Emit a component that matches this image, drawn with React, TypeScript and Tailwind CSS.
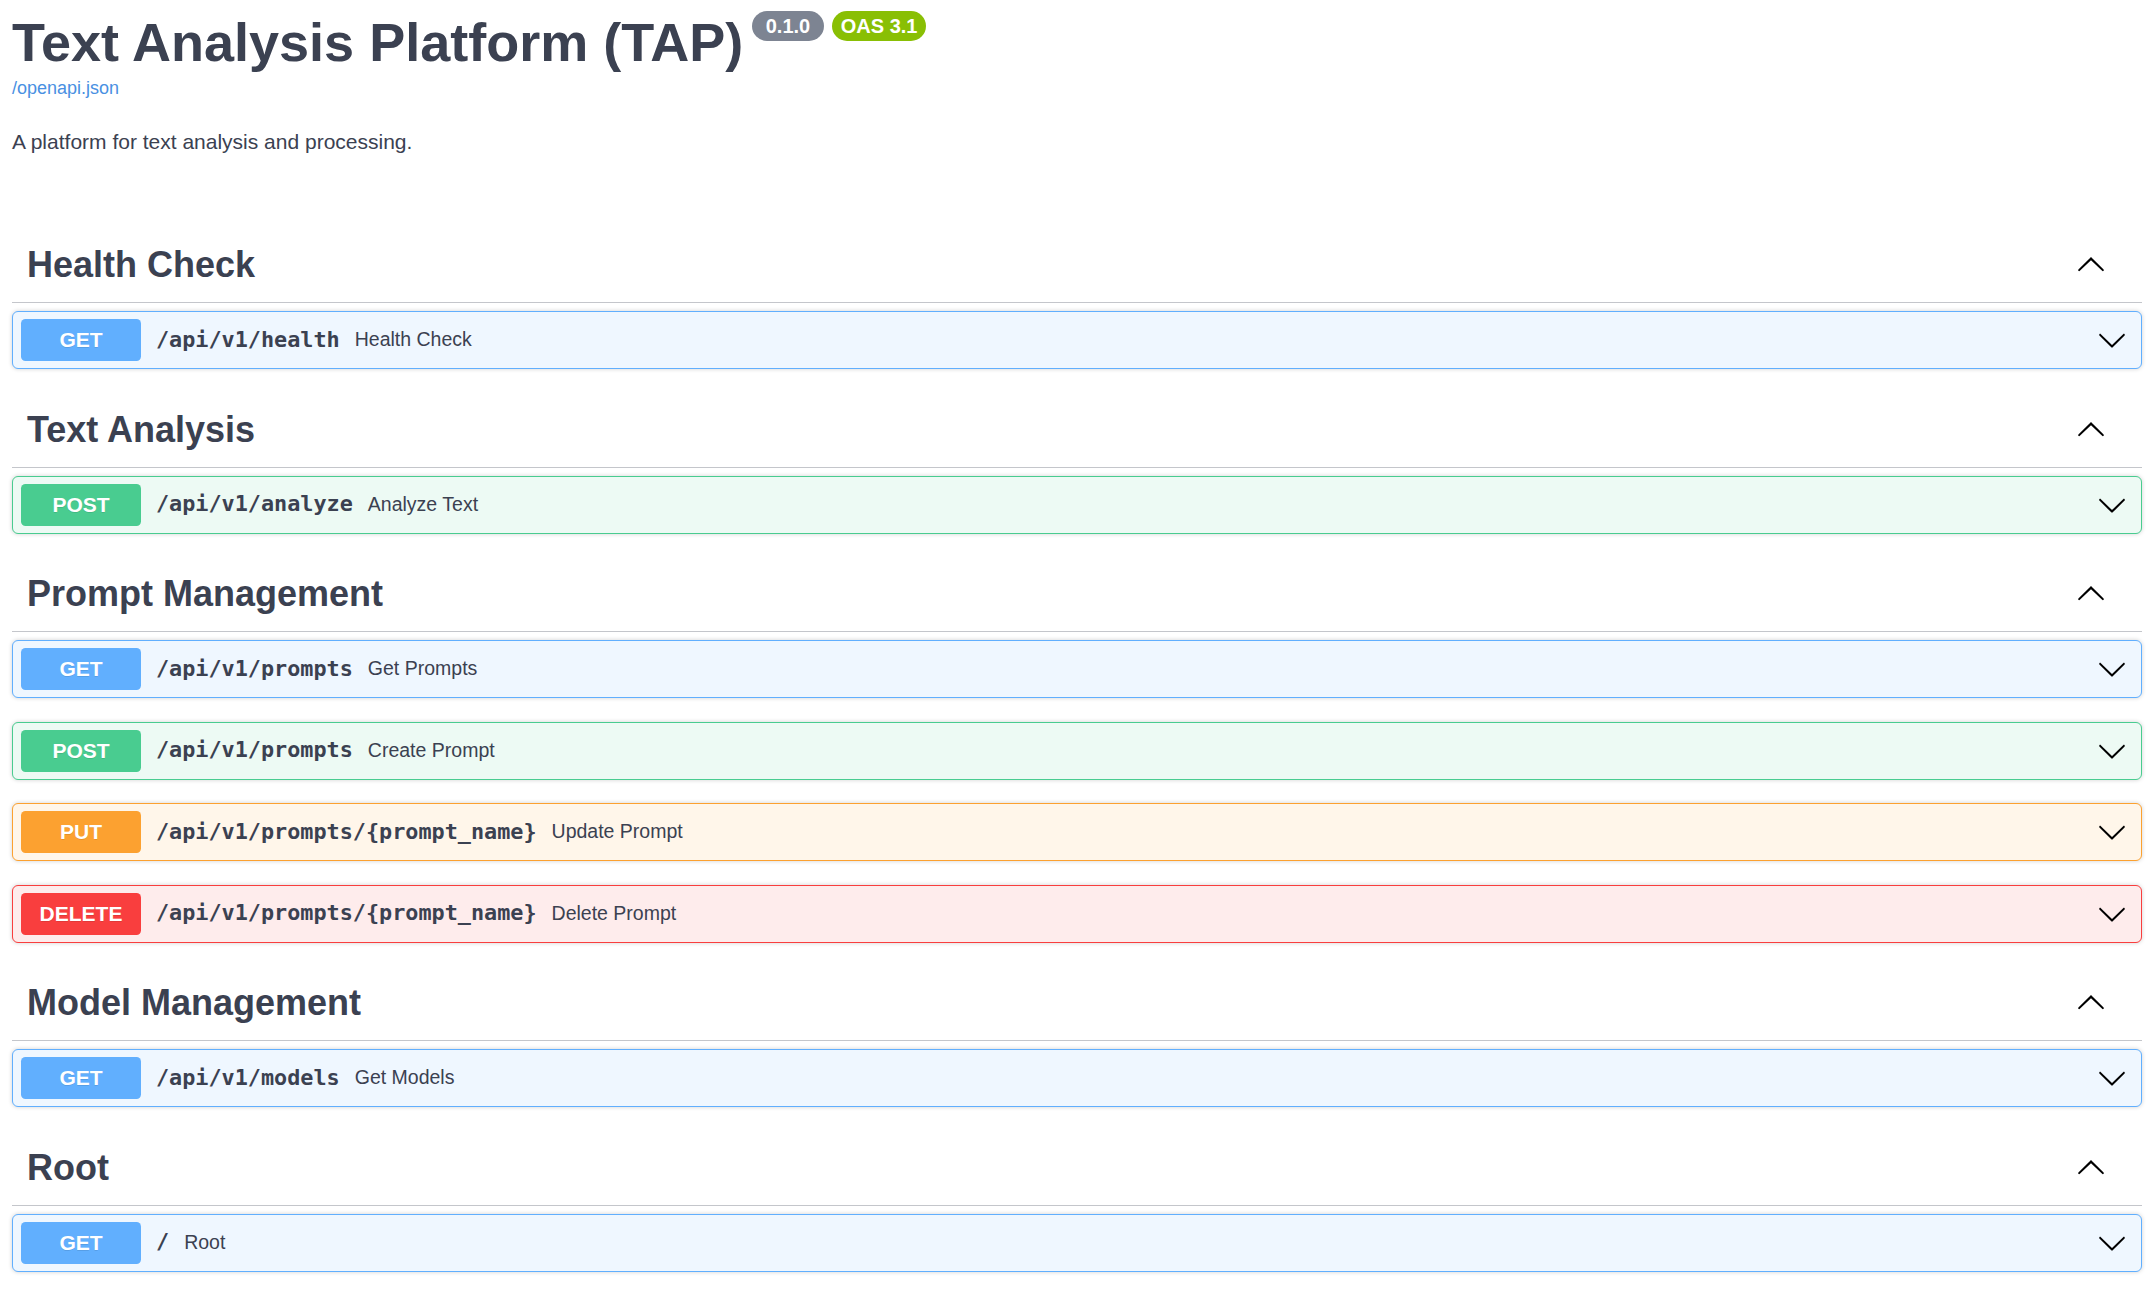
import React from 'react';

type Method = 'GET' | 'POST' | 'PUT' | 'DELETE';

interface Operation {
  method: Method;
  path: string;
  summary: string;
}

interface Tag {
  name: string;
  ops: Operation[];
}

const tags: Tag[] = [
  { name: 'Health Check', ops: [{ method: 'GET', path: '/api/v1/health', summary: 'Health Check' }] },
  { name: 'Text Analysis', ops: [{ method: 'POST', path: '/api/v1/analyze', summary: 'Analyze Text' }] },
  {
    name: 'Prompt Management',
    ops: [
      { method: 'GET', path: '/api/v1/prompts', summary: 'Get Prompts' },
      { method: 'POST', path: '/api/v1/prompts', summary: 'Create Prompt' },
      { method: 'PUT', path: '/api/v1/prompts/{prompt_name}', summary: 'Update Prompt' },
      { method: 'DELETE', path: '/api/v1/prompts/{prompt_name}', summary: 'Delete Prompt' },
    ],
  },
  { name: 'Model Management', ops: [{ method: 'GET', path: '/api/v1/models', summary: 'Get Models' }] },
  { name: 'Root', ops: [{ method: 'GET', path: '/', summary: 'Root' }] },
];

// block border/background + badge colour per method
const methodStyles: Record<Method, { block: string; badge: string }> = {
  GET: { block: 'border-[#61affe] bg-[#eff7ff]', badge: 'bg-[#61affe]' },
  POST: { block: 'border-[#49cc90] bg-[#edfaf4]', badge: 'bg-[#49cc90]' },
  PUT: { block: 'border-[#fca130] bg-[#fff6ea]', badge: 'bg-[#fca130]' },
  DELETE: { block: 'border-[#f93e3e] bg-[#feecec]', badge: 'bg-[#f93e3e]' },
};

const ARROW =
  'M17.418 6.109c.272-.268.709-.268.979 0s.271.701 0 .969l-7.908 7.83c-.27.268-.707.268-.979 0l-7.908-7.83c-.27-.268-.27-.701 0-.969.271-.268.709-.268.979 0L10 13.25l7.418-7.141z';

function Arrow({ up = false }: { up?: boolean }) {
  return (
    <svg
      width="30"
      height="30"
      viewBox="0 0 20 20"
      className={up ? 'rotate-180 shrink-0' : 'shrink-0'}
      aria-hidden="true"
    >
      <path d={ARROW} fill="#000" />
    </svg>
  );
}

function OpBlock({ op }: { op: Operation }) {
  const s = methodStyles[op.method];
  return (
    <div
      className={`mb-[23.5px] flex h-[58px] items-center rounded-[6px] border pl-[8px] pr-[14px] shadow-[0_0_4.5px_rgba(0,0,0,0.19)] ${s.block}`}
    >
      <span
        className={`flex h-[42px] w-[120px] shrink-0 items-center justify-center rounded-[4.5px] text-[21px] font-bold text-white [text-shadow:0_1px_0_rgba(0,0,0,0.1)] ${s.badge}`}
      >
        {op.method}
      </span>
      <span className="px-[15px] font-['DejaVu_Sans_Mono',monospace] text-[21.8px] font-bold text-[#3b4151]">
        {op.path}
      </span>
      <span className="flex-1 text-[19.5px] text-[#3b4151]">{op.summary}</span>
      <Arrow />
    </div>
  );
}

function TagSection({ tag }: { tag: Tag }) {
  return (
    <section className="flex flex-col">
      <h3 className="mb-[8px] flex h-[75px] items-center border-b border-[#c4c6cb] pl-[15px] pr-[36px] text-[36px] font-bold text-[#3b4151]">
        <span className="flex-1">{tag.name}</span>
        <Arrow up />
      </h3>
      {tag.ops.map((op, i) => (
        <OpBlock key={i} op={op} />
      ))}
    </section>
  );
}

export default function App() {
  return (
    <div className="min-h-screen bg-white pl-[12px] pr-[8px] font-['Liberation_Sans',Arial,sans-serif] text-[#3b4151]">
      {/* Info header */}
      <div className="pt-[11px]">
        <div className="flex items-start">
          <h2 className="text-[54px] font-bold leading-[62px] text-[#3b4151]">Text Analysis Platform (TAP)</h2>
          <span className="ml-[9px] mt-[0px] flex h-[30px] items-center rounded-full bg-[#7d8492] px-[8px] text-[20px] font-bold whitespace-pre text-white">
            {' 0.1.0 '}
          </span>
          <span className="ml-[8px] mt-[0px] flex h-[30px] items-center rounded-full bg-[#89bf04] px-[9px] text-[20px] font-bold text-white">
            OAS 3.1
          </span>
        </div>
        <a className="mt-[5px] block text-[18px] leading-[21px] text-[#4990e2]">/openapi.json</a>
        <p className="mt-[31px] text-[21px] leading-[24px] text-[#3b4151]">A platform for text analysis and processing.</p>
      </div>

      {/* Tag groups */}
      <div className="mt-[74px]">
        {tags.map((t) => (
          <TagSection key={t.name} tag={t} />
        ))}
      </div>
    </div>
  );
}
